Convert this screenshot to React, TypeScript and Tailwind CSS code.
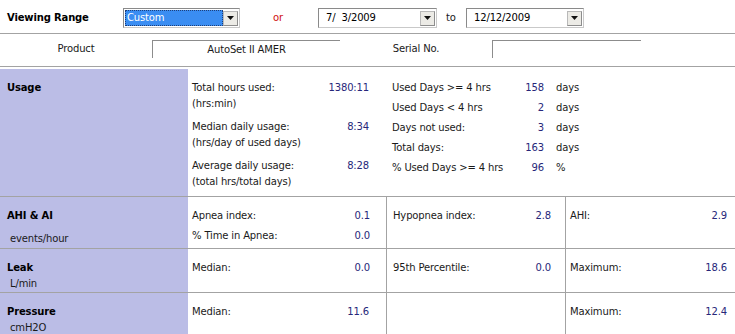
import React from "react";

const line = "border-[#a3a3a3]";
const num = "text-[#27277a]";

function Arrow() {
    return (
        <span className="flex items-center justify-center w-[15px] h-[15px] bg-[#ecebe6] border border-[#b9b9b9] border-b-[#8d8d8d] border-r-[#8d8d8d]">
            <svg width="7" height="4" viewBox="0 0 7 4">
                <polygon points="0,0 7,0 3.5,4" fill="#111" />
            </svg>
        </span>
    );
}

function Combo({ value, width, selected }: { value: string; width: string; selected?: boolean }) {
    return (
        <div className={`${width} h-[20px] flex items-center border border-[#8a8a8a] border-b-[#c9c9c9] border-r-[#c9c9c9] bg-white pl-[1px] pr-[1px]`}>
            {selected ? (
                <div className="flex-1 h-[16px] bg-[#3a8df2] border border-dotted border-[#1d3f7a] text-white leading-[14px] pl-[1px]">
                    {value}
                </div>
            ) : (
                <div className="flex-1 h-[16px] leading-[16px] pl-[6px] text-black whitespace-pre">{value}</div>
            )}
            <Arrow />
        </div>
    );
}

function Cell({ label, value }: { label: string; value: string }) {
    return (
        <div className="flex justify-between leading-[20px]">
            <span>{label}</span>
            <span className={num}>{value}</span>
        </div>
    );
}

export default function App() {
    const usageLeft = [
        ["Total hours used:", "(hrs:min)", "1380:11"],
        ["Median daily usage:", "(hrs/day of used days)", "8:34"],
        ["Average daily usage:", "(total hrs/total days)", "8:28"],
    ];
    const usageRight = [
        ["Used Days >= 4 hrs", "158", "days"],
        ["Used Days < 4 hrs", "2", "days"],
        ["Days not used:", "3", "days"],
        ["Total days:", "163", "days"],
        ["% Used Days >= 4 hrs", "96", "%"],
    ];

    return (
        <div className="w-[735px] h-[334px] overflow-hidden bg-white text-[10px] tracking-[-0.15px] text-[#1a1a1a] font-['DejaVu_Sans',sans-serif]">
            {/* viewing range */}
            <div className={`h-[34px] flex items-start pt-[8px] border-b ${line}`}>
                <div className="w-[123px] pl-[7px] font-bold text-[10px] leading-[20px] text-black">Viewing Range</div>
                <Combo value="Custom" width="w-[117px]" selected />
                <div className="ml-[33px] w-[45px] leading-[20px] text-[#d01010]">or</div>
                <Combo value="7/  3/2009" width="w-[119px]" />
                <div className="ml-[9px] w-[20px] leading-[20px]">to</div>
                <Combo value="12/12/2009" width="w-[118px]" />
            </div>

            {/* product */}
            <div className={`h-[33px] flex items-start pt-[6px] border-b ${line}`}>
                <div className="w-[152px] text-center leading-[18px]">Product</div>
                <div className="w-[188px] h-[18px] border-t border-l border-[#8c8c8c] text-center leading-[17px]">AutoSet II AMER</div>
                <div className="w-[152px] text-center leading-[18px]">Serial No.</div>
                <div className="w-[149px] h-[18px] border-t border-l border-[#8c8c8c]"></div>
            </div>

            <div className="h-[2px]" />

            {/* usage */}
            <div className={`grid grid-cols-[188px_198px_179px_1fr] h-[128px] border-b ${line}`}>
                <div className="bg-[#bbbde6] pl-[7px] pt-[11px] leading-[16px] font-bold text-black">Usage</div>
                <div className="pl-[4px] pr-[17px] pt-[11px] flex flex-col gap-[7px]">
                    {usageLeft.map(([a, b, v]) => (
                        <div key={a} className="flex justify-between leading-[16px]">
                            <div>
                                <div>{a}</div>
                                <div>{b}</div>
                            </div>
                            <span className={num}>{v}</span>
                        </div>
                    ))}
                </div>
                <div className="col-span-2 pl-[6px] pt-[9px]">
                    {usageRight.map(([a, v, u]) => (
                        <div key={a} className="grid grid-cols-[114px_38px_auto] leading-[20px]">
                            <span className="whitespace-nowrap">{a}</span>
                            <span className={`${num} text-right`}>{v}</span>
                            <span className="pl-[12px]">{u}</span>
                        </div>
                    ))}
                </div>
            </div>

            {/* AHI & AI */}
            <div className={`grid grid-cols-[188px_198px_179px_1fr] h-[52px] border-b ${line}`}>
                <div className="bg-[#bbbde6] pl-[7px] pt-[11px] leading-[16px]">
                    <div className="font-bold text-black">AHI &amp; AI</div>
                    <div className="pl-[3px] mt-[7px]">events/hour</div>
                </div>
                <div className="pl-[4px] pr-[16px] pt-[9px]">
                    <Cell label="Apnea index:" value="0.1" />
                    <Cell label="% Time in Apnea:" value="0.0" />
                </div>
                <div className={`border-l ${line} pl-[6px] pr-[14px] pt-[9px]`}>
                    <Cell label="Hypopnea index:" value="2.8" />
                </div>
                <div className={`border-l ${line} pl-[4px] pr-[8px] pt-[9px]`}>
                    <Cell label="AHI:" value="2.9" />
                </div>
            </div>

            {/* leak */}
            <div className={`grid grid-cols-[188px_198px_179px_1fr] h-[44px] border-b ${line}`}>
                <div className="bg-[#bbbde6] pl-[7px] pt-[11px] leading-[16px]">
                    <div className="font-bold text-black">Leak</div>
                    <div className="pl-[3px]">L/min</div>
                </div>
                <div className="pl-[4px] pr-[16px] pt-[9px]">
                    <Cell label="Median:" value="0.0" />
                </div>
                <div className={`border-l ${line} pl-[6px] pr-[14px] pt-[9px]`}>
                    <Cell label="95th Percentile:" value="0.0" />
                </div>
                <div className={`border-l ${line} pl-[4px] pr-[8px] pt-[9px]`}>
                    <Cell label="Maximum:" value="18.6" />
                </div>
            </div>

            {/* pressure */}
            <div className="grid grid-cols-[188px_198px_179px_1fr] h-[44px]">
                <div className="bg-[#bbbde6] pl-[7px] pt-[11px] leading-[16px]">
                    <div className="font-bold text-black">Pressure</div>
                    <div className="pl-[3px] leading-[15px]">cmH2O</div>
                </div>
                <div className="pl-[4px] pr-[17px] pt-[9px]">
                    <Cell label="Median:" value="11.6" />
                </div>
                <div className={`border-l ${line}`}></div>
                <div className={`border-l ${line} pl-[4px] pr-[8px] pt-[9px]`}>
                    <Cell label="Maximum:" value="12.4" />
                </div>
            </div>
        </div>
    );
}
